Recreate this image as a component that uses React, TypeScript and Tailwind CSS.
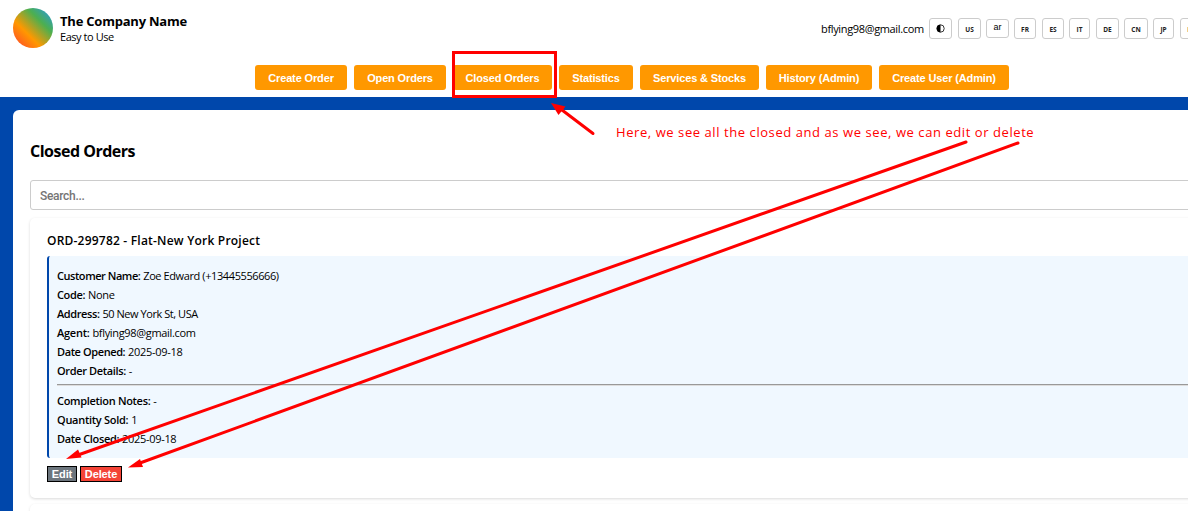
import type { ReactNode } from 'react';

const navItems = [
  { label: 'Create Order', width: 'w-[92px]' },
  { label: 'Open Orders', width: 'w-[92px]' },
  { label: 'Closed Orders', width: 'w-[99px]' },
  { label: 'Statistics', width: 'w-[74px]' },
  { label: 'Services & Stocks', width: 'w-[119px]' },
  { label: 'History (Admin)', width: 'w-[106px]' },
  { label: 'Create User (Admin)', width: 'w-[130px]' },
];

const languages = [
  { code: 'FR', box: 'w-[22px] mr-[6px]' },
  { code: 'ES', box: 'w-[22px] mr-[5px]' },
  { code: 'IT', box: 'w-[21px] mr-[6px]' },
  { code: 'DE', box: 'w-[23px] mr-[5px]' },
  { code: 'CN', box: 'w-[24px] mr-[5px]' },
  { code: 'JP', box: 'w-[21px] mr-[6px]' },
  { code: 'KR', box: 'w-[23px]' },
];

const toolBox =
  'flex h-[21px] shrink-0 items-center justify-center rounded-[3px] border border-[#ccc] bg-white';

function LanguageButton({ code, box }: { code: string; box: string }) {
  return (
    <button className={`${toolBox} ${box} pt-[3px] text-[6.5px] font-bold text-[#222]`}>{code}</button>
  );
}

function Row({ label, labelSpacing, spacing = '', children }: {
  label: string;
  labelSpacing: string;
  spacing?: string;
  children: ReactNode;
}) {
  return (
    <p className="h-[19px] text-[11px] leading-[19px]">
      <strong className={`font-semibold ${labelSpacing}`}>{label}</strong>{' '}
      <span className={spacing}>{children}</span>
    </p>
  );
}

function Header() {
  return (
    <header className="h-[97px] bg-white">
      <div className="flex h-[65px] items-start">
        <div className="ml-[13px] mt-2 size-10 shrink-0 rounded-full bg-[linear-gradient(45deg,#ff5722_0%,#ff5722_10%,#ff9800_36%,#4caf50_68%,#2196f3_100%)]" />
        <div className="ml-[7px] mt-[13px] w-[761px] shrink-0">
          <div className="text-[13px] font-bold leading-4 tracking-[-0.22px]">The Company Name</div>
          <div className="text-[11px] leading-4 tracking-[-0.45px]">Easy to Use</div>
        </div>
        <div className="mt-[18px] flex shrink-0 items-start">
          <span className="w-[108px] whitespace-nowrap text-[11px] leading-[21px] tracking-[-0.35px]">
            bflying98@gmail.com
          </span>
          <button className={`${toolBox} mr-[6px] w-[23px]`}>
            <svg className="size-[9px]" viewBox="0 0 9 9">
              <circle cx="4.5" cy="4.5" r="3.7" fill="white" stroke="black" strokeWidth="0.8" />
              <path d="M4.5 .8a3.7 3.7 0 0 0 0 7.4z" fill="black" />
            </svg>
          </button>
          <LanguageButton code="US" box="w-[23px] mr-[5px]" />
          <button className="mr-[5px] mt-px flex h-[19px] w-[23px] shrink-0 items-center justify-center rounded-[3px] border border-[#ccc] pb-[2px] font-['Liberation_Sans',sans-serif] text-[9px] leading-none">
            ar
          </button>
          {languages.map((l) => (
            <LanguageButton key={l.code} code={l.code} box={l.box} />
          ))}
        </div>
      </div>
      <nav className="ml-[255px] flex gap-[7px]">
        {navItems.map((item) => (
          <button
            key={item.label}
            className={`${item.width} h-[25px] shrink-0 whitespace-nowrap rounded-[3px] bg-[#ff9800] pt-px font-['Liberation_Sans',sans-serif] text-[11px] font-bold leading-6 tracking-[-0.14px] text-white`}
          >
            {item.label}
          </button>
        ))}
      </nav>
    </header>
  );
}

function OrderCard() {
  return (
    <article className="mt-2 h-[280px] w-[1300px] rounded-[5px] bg-white px-[17px] pt-[13px] shadow-[0_1px_3px_rgba(0,0,0,0.15)]">
      <h3 className="h-[25px] text-[12px] font-semibold leading-[20px] tracking-[0.21px]">
        ORD-299782 - Flat-New York Project
      </h3>
      <div className="h-[202px] rounded-[3px] border-l-2 border-[#0047ab] bg-[#f0f8ff] pl-2 pt-[10px]">
        <Row label="Customer Name:" labelSpacing="tracking-[-0.45px]" spacing="tracking-[-0.4px]">
          Zoe Edward (+13445556666)
        </Row>
        <Row label="Code:" labelSpacing="tracking-[-0.35px]" spacing="tracking-[-0.3px]">None</Row>
        <Row label="Address:" labelSpacing="tracking-[-0.4px]" spacing="tracking-[-0.45px]">50 New York St, USA</Row>
        <Row label="Agent:" labelSpacing="tracking-[-0.25px]" spacing="tracking-[-0.33px]">bflying98@gmail.com</Row>
        <Row label="Date Opened:" labelSpacing="tracking-[-0.4px]" spacing="tracking-[-0.3px]">2025-09-18</Row>
        <Row label="Order Details:" labelSpacing="tracking-[-0.35px]">-</Row>
        <hr className="mb-[5px] mt-[4px] h-[2px] border-0 border-t border-[#999] bg-[#ddd]" />
        <Row label="Completion Notes:" labelSpacing="tracking-[-0.32px]">-</Row>
        <Row label="Quantity Sold:" labelSpacing="tracking-[-0.28px]">1</Row>
        <Row label="Date Closed:" labelSpacing="tracking-[-0.35px]" spacing="tracking-[-0.3px]">2025-09-18</Row>
      </div>
      <div className="mt-2 flex gap-[3px] font-['Liberation_Sans',sans-serif] text-[11px] font-bold tracking-[-0.1px] text-white">
        <button className="h-4 w-[30px] border border-black bg-[#6c757d] leading-[14px]">Edit</button>
        <button className="h-4 w-[42px] border border-black bg-[#f44336] leading-[14px]">Delete</button>
      </div>
    </article>
  );
}

function Annotations() {
  return (
    <div className="pointer-events-none absolute inset-0 text-[#ff0000]">
      <svg className="absolute inset-0" width="1188" height="511" fill="none" stroke="#ff0000" strokeWidth="3">
        <rect x="453.5" y="52.5" width="102" height="44" />
        <g strokeLinecap="round">
          <path d="M562 110L593 133.500" />
          <path d="M78 455L966 142" />
          <path d="M140 463L1018 143" />
        </g>
        <g fill="#ff0000" stroke="none">
          <path d="M551 103L565.500 106.500L558.500 115Z" />
          <path d="M66 459L78 449.500L81.500 457.500Z" />
          <path d="M128 467.500L140 459L143 467Z" />
        </g>
      </svg>
      <p className="absolute left-[616px] top-[122px] whitespace-nowrap text-[13px] leading-5 tracking-[0.57px]">
        Here, we see all the closed and as we see, we can edit or delete
      </p>
    </div>
  );
}

export default function App() {
  return (
    <div className="relative h-[511px] w-[1188px] overflow-hidden bg-[#0047ab] font-['Open_Sans','Noto_Sans',sans-serif] text-black">
      <Header />
      <main className="ml-[13px] mt-[13px] h-[500px] w-[1400px] rounded-[6px] bg-white px-[17px] pt-[30px]">
        <h2 className="h-[40px] text-[16px] font-bold leading-[23px] tracking-[-0.5px]">Closed Orders</h2>
        <input
          placeholder="Search..."
          className="block h-[30px] w-[1300px] rounded-[3px] border border-[#ccc] px-[9px] pt-px font-['Roboto',sans-serif] text-[12px] font-medium tracking-[-0.3px] placeholder:text-[#757575]"
        />
        <OrderCard />
        <article className="mt-[6px] h-[280px] w-[1300px] rounded-[5px] bg-white shadow-[0_1px_3px_rgba(0,0,0,0.12)]" />
      </main>
      <Annotations />
    </div>
  );
}
